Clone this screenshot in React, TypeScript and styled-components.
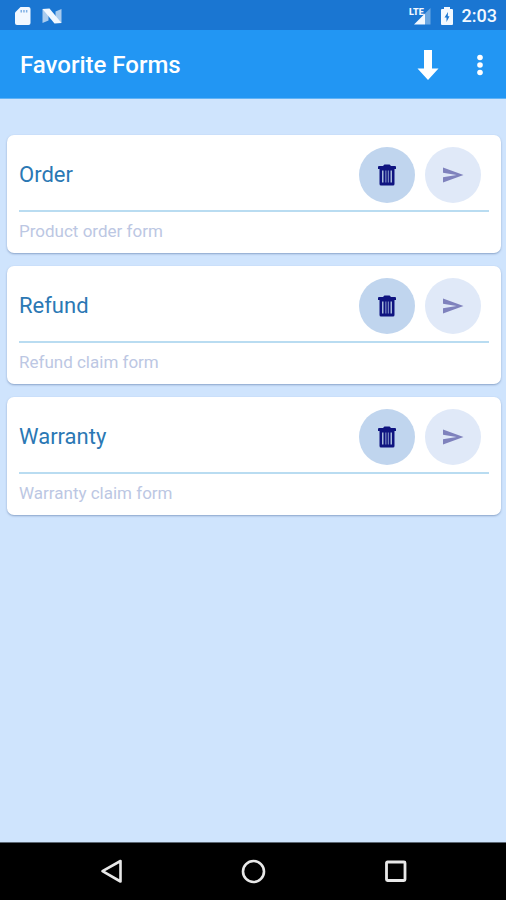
import React from "react";
import styled, { createGlobalStyle } from "styled-components";

const GlobalStyle = createGlobalStyle`
  *, *::before, *::after { box-sizing: border-box; }
  body {
    margin: 0;
    background: #cfe4fd;
    font-family: Roboto, "Noto Sans", sans-serif;
  }
  h1, h2, p, ul { margin: 0; padding: 0; }
`;

const Screen = styled.div`
  display: flex;
  flex-direction: column;
  min-height: 100vh;
  background: #cfe4fd;
`;

const StatusBar = styled.div`
  display: flex;
  align-items: center;
  justify-content: space-between;
  height: 30px;
  padding: 1px 9px 0 14px;
  background: #1a76d2;
  color: #f2f8ff;
`;

const StatusGroup = styled.div<{ $gap: number }>`
  display: flex;
  align-items: center;
  gap: ${(p) => p.$gap}px;
`;

const Clock = styled.time`
  font-size: 18px;
  line-height: 24px;
  font-weight: 500;
`;

const AppBar = styled.header`
  display: flex;
  align-items: center;
  height: 69px;
  padding: 2px 10px 0 20px;
  background: #2296f3;
  border-bottom: 1px solid #60b3f6;
  color: #ffffff;
`;

const AppTitle = styled.h1`
  flex: 1;
  font-size: 24px;
  line-height: 32px;
  font-weight: 500;
`;

const BarActions = styled.div`
  display: flex;
  gap: 20px;
`;

const BarButton = styled.button`
  display: grid;
  place-items: center;
  width: 32px;
  height: 40px;
  padding: 0;
  border: 0;
  background: none;
  color: inherit;
  cursor: pointer;
`;

const FormList = styled.ul`
  flex: 1;
  display: flex;
  flex-direction: column;
  gap: 13px;
  padding: 36px 5px 24px 7px;
  list-style: none;
`;

const Card = styled.li`
  padding: 12px 12px 10px;
  border-radius: 7px;
  background: #ffffff;
  box-shadow: 0 1px 2px rgba(70, 100, 150, 0.5);
`;

const CardTop = styled.div`
  display: flex;
  align-items: center;
  gap: 10px;
  padding: 0 8px 7px 0;
  border-bottom: 2px solid #b9dcf1;
`;

const CardTitle = styled.h2`
  flex: 1;
  font-size: 22px;
  line-height: 28px;
  font-weight: 400;
  color: #2b78b4;
`;

const CardText = styled.p`
  padding-top: 7px;
  font-size: 17px;
  line-height: 24px;
  color: #bcc7e3;
`;

const RoundButton = styled.button<{ $tone: "strong" | "soft" }>`
  display: grid;
  place-items: center;
  width: 56px;
  height: 56px;
  padding: 0;
  border: 0;
  border-radius: 50%;
  background: ${(p) => (p.$tone === "strong" ? "#c0d5ee" : "#e0e9f8")};
  color: ${(p) => (p.$tone === "strong" ? "#0f1480" : "#7f82bd")};
  cursor: pointer;
`;

const NavBar = styled.nav`
  display: grid;
  grid-template-columns: repeat(3, 1fr);
  height: 58px;
  padding: 0 40px;
  background: #000000;
  border-top: 1px solid #5c6773;
`;

const NavButton = styled.button`
  display: grid;
  place-items: center;
  padding: 0;
  border: 0;
  background: none;
  color: #e8e8e8;
  cursor: pointer;
`;

const SdCardIcon = () => (
  <svg width="18" height="20" viewBox="0 0 18 20" aria-hidden="true">
    <path
      fill="currentColor"
      d="M6.500 1H14.500Q16.500 1 16.500 3V17Q16.500 19 14.500 19H3Q1 19 1 17V6.500Z"
    />
    <path fill="#7fb0e4" d="M6.500 4H8V6.500H6.500ZM9.200 4H10.700V6.500H9.200ZM11.900 4H13.400V6.500H11.900Z" />
  </svg>
);

const NougatIcon = () => (
  <svg width="20" height="16" viewBox="0 0 20 16" aria-hidden="true">
    <path fill="#a9cbee" d="M0.500 1 6.500 3V12.500L0.500 15ZM13.500 3.500 19.500 1V15L13.500 13Z" />
    <path fill="currentColor" d="M0.500 1 7.500 0.500 19.500 15 12.500 15.500Z" />
  </svg>
);

const SignalIcon = () => (
  <svg width="24" height="20" viewBox="0 0 24 20" aria-hidden="true">
    <path fill="#6ca7e2" d="M22.500 2V18.500H17V7.500Z" />
    <path fill="currentColor" d="M6 18.500 17 7.500V18.500Z" />
    <text
      x="1"
      y="9"
      fill="currentColor"
      fontFamily="Roboto, sans-serif"
      fontSize="9"
      fontWeight="900"
    >
      LTE
    </text>
  </svg>
);

const BatteryIcon = () => (
  <svg width="14" height="20" viewBox="0 0 14 20" aria-hidden="true">
    <path
      fill="currentColor"
      fillRule="evenodd"
      d="M4 1H10V3H12Q13 3 13 4V18Q13 19 12 19H2Q1 19 1 18V4Q1 3 2 3H4ZM8 6 4.500 11.500H6.500V16L9.500 10.300H7.800Z"
    />
  </svg>
);

const DownloadIcon = () => (
  <svg width="22" height="32" viewBox="0 0 22 32" aria-hidden="true">
    <path fill="currentColor" d="M7 1H15V19.500H21.500L11 31 0.500 19.500H7Z" />
  </svg>
);

const MoreIcon = () => (
  <svg width="8" height="22" viewBox="0 0 8 22" aria-hidden="true">
    <g fill="currentColor">
      <circle cx="4" cy="3.500" r="2.800" />
      <circle cx="4" cy="11" r="2.800" />
      <circle cx="4" cy="18.500" r="2.800" />
    </g>
  </svg>
);

const TrashIcon = () => (
  <svg width="20" height="22" viewBox="0 0 20 22" aria-hidden="true">
    <path
      fill="currentColor"
      d="M7.500 0.500H12.500Q13.300 0.500 13.800 2H18Q19 2 19 3V5H17.500V20Q17.500 21.500 16 21.500H4Q2.500 21.500 2.500 20V5H1V3Q1 2 2 2H6.200Q6.700 0.500 7.500 0.500Z"
    />
    <path fill="#a9bbdc" d="M5 6.500H6.500V18.500H5ZM13.500 6.500H15V18.500H13.500Z" />
    <path fill="#8090c6" d="M8.300 6.500H9.400V18.500H8.300ZM10.800 6.500H11.900V18.500H10.800Z" />
  </svg>
);

const SendIcon = () => (
  <svg width="22" height="16" viewBox="0 0 22 16" aria-hidden="true">
    <path fill="currentColor" d="M1 0.500 21.500 8 1 15.500V10.300L14.500 8 1 5.700Z" />
  </svg>
);

const BackIcon = () => (
  <svg width="24" height="26" viewBox="0 0 24 26" aria-hidden="true">
    <path
      d="M21.500 2V22.500L3.500 12.200Z"
      fill="none"
      stroke="currentColor"
      strokeWidth="2.600"
      strokeLinejoin="round"
    />
  </svg>
);

const HomeIcon = () => (
  <svg width="26" height="26" viewBox="0 0 26 26" aria-hidden="true">
    <circle cx="13.500" cy="12.500" r="10.500" fill="none" stroke="currentColor" strokeWidth="2.600" />
  </svg>
);

const RecentsIcon = () => (
  <svg width="24" height="24" viewBox="0 0 24 24" aria-hidden="true">
    <rect
      x="3.500"
      y="2"
      width="18.500"
      height="18.500"
      rx="1"
      fill="none"
      stroke="currentColor"
      strokeWidth="2.800"
    />
  </svg>
);

interface FavoriteForm {
  title: string;
  description: string;
}

const forms: FavoriteForm[] = [
  { title: "Order", description: "Product order form" },
  { title: "Refund", description: "Refund claim form" },
  { title: "Warranty", description: "Warranty claim form" },
];

const FormCard = ({ title, description }: FavoriteForm) => (
  <Card>
    <CardTop>
      <CardTitle>{title}</CardTitle>
      <RoundButton type="button" $tone="strong" aria-label={`Delete ${title}`}>
        <TrashIcon />
      </RoundButton>
      <RoundButton type="button" $tone="soft" aria-label={`Send ${title}`}>
        <SendIcon />
      </RoundButton>
    </CardTop>
    <CardText>{description}</CardText>
  </Card>
);

export default function App() {
  return (
    <>
      <GlobalStyle />
      <Screen>
        <StatusBar>
          <StatusGroup $gap={10}>
            <SdCardIcon />
            <NougatIcon />
          </StatusGroup>
          <StatusGroup $gap={8}>
            <SignalIcon />
            <BatteryIcon />
            <Clock>2:03</Clock>
          </StatusGroup>
        </StatusBar>
        <AppBar>
          <AppTitle>Favorite Forms</AppTitle>
          <BarActions>
            <BarButton type="button" aria-label="Download">
              <DownloadIcon />
            </BarButton>
            <BarButton type="button" aria-label="More options">
              <MoreIcon />
            </BarButton>
          </BarActions>
        </AppBar>
        <FormList>
          {forms.map((form) => (
            <FormCard key={form.title} {...form} />
          ))}
        </FormList>
        <NavBar>
          <NavButton type="button" aria-label="Back">
            <BackIcon />
          </NavButton>
          <NavButton type="button" aria-label="Home">
            <HomeIcon />
          </NavButton>
          <NavButton type="button" aria-label="Recent apps">
            <RecentsIcon />
          </NavButton>
        </NavBar>
      </Screen>
    </>
  );
}
